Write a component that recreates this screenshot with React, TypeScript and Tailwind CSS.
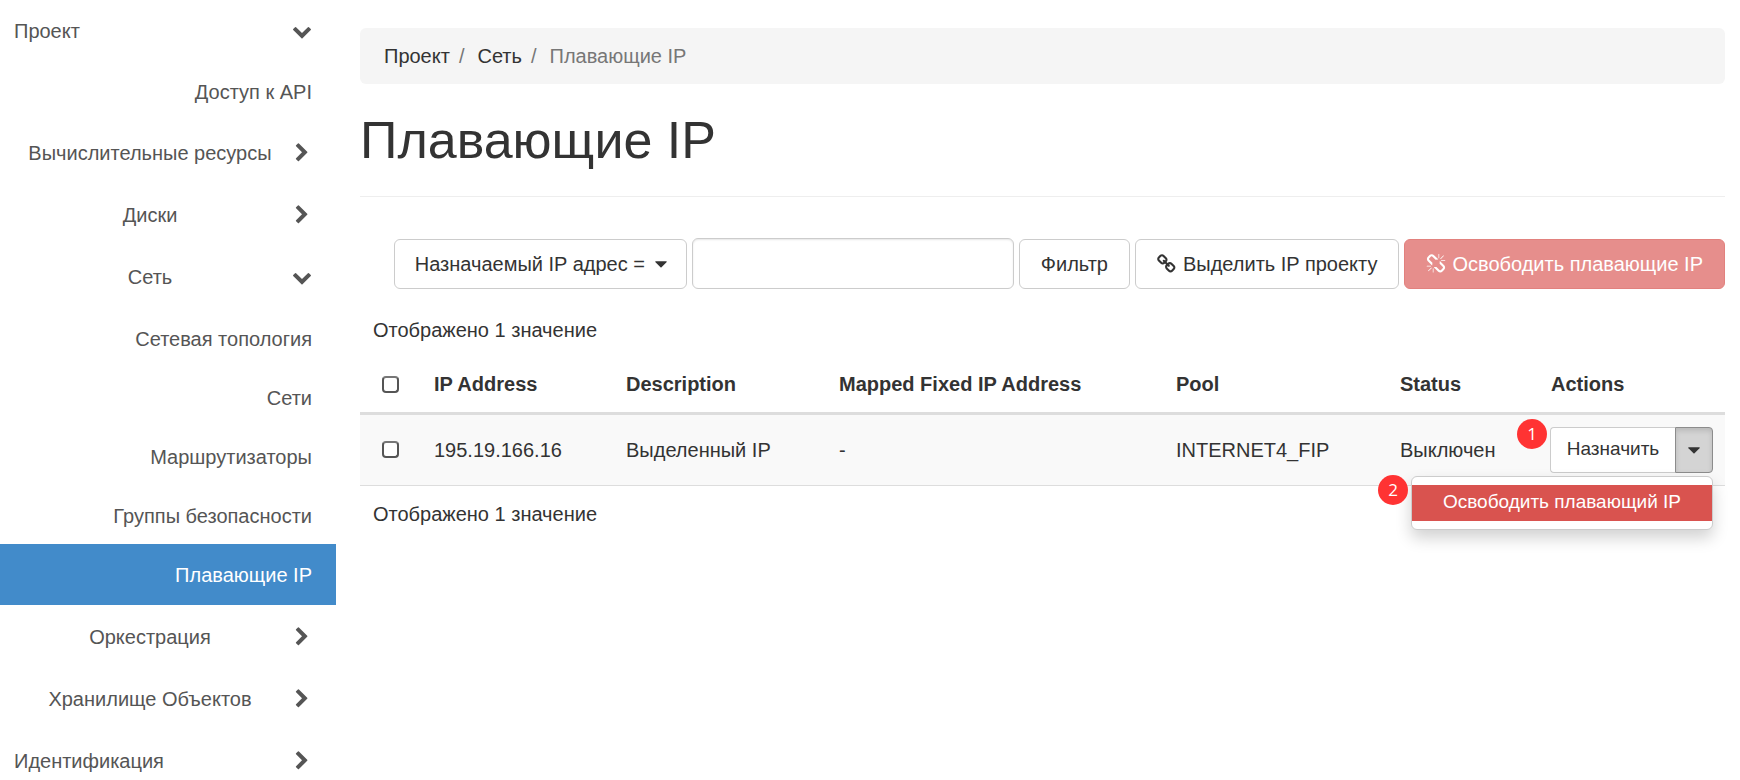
import { useState } from 'react'
import clsx from 'clsx'

interface NavItem {
  label: string
  kind: 'root' | 'panel' | 'link'
  open?: boolean
}

interface FloatingIp {
  address: string
  description: string
  mapped: string
  pool: string
  status: string
}

const ICONS = {
  chevronDown:
    'M1683 808l-742 741q-19 19-45 19t-45-19l-742-741q-19-19-19-45.5t19-45.5l166-165q19-19 45-19t45 19l531 531 531-531q19-19 45-19t45 19l166 165q19 19 19 45.5t-19 45.5z',
  chevronRight:
    'M1363 877l-742 742q-19 19-45 19t-45-19l-166-166q-19-19-19-45t19-45l531-531-531-531q-19-19-19-45t19-45l166-166q19-19 45-19t45 19l742 742q19 19 19 45t-19 45z',
  caret:
    'M1408 704q0 26-19 45l-448 448q-19 19-45 19t-45-19l-448-448q-19-19-19-45t19-45 45-19h896q26 0 45 19t19 45z',
  link:
    'M1456 1216q0-40-28-68l-208-208q-28-28-68-28-42 0-72 32 3 3 19 18.5t21.5 21.5 15 19 13 25.5 3.5 27.5q0 40-28 68t-68 28q-15 0-27.5-3.5t-25.5-13-19-15-21.5-21.5-18.5-19q-33 31-33 73 0 40 28 68l206 207q27 27 68 27 40 0 68-26l147-146q28-28 28-67zm-703-705q0-40-28-68l-206-207q-28-28-68-28-39 0-68 27l-147 146q-28 28-28 67 0 40 28 68l208 208q27 27 68 27 42 0 72-31-3-3-19-18.5t-21.5-21.5-15-19-13-25.5-3.5-27.5q0-40 28-68t68-28q15 0 27.5 3.5t25.5 13 19 15 21.5 21.5 18.5 19q33-31 33-73zm895 705q0 120-85 203l-147 146q-83 83-203 83-121 0-204-85l-206-207q-83-83-83-203 0-123 88-209l-88-88q-86 88-208 88-120 0-204-84l-208-208q-84-84-84-204t85-203l147-146q83-83 203-83 121 0 204 85l206 207q83 83 83 203 0 123-88 209l88 88q86-88 208-88 120 0 204 84l208 208q84 84 84 204z',
  unlink:
    'M503 1271l-256 256q-10 9-23 9-12 0-23-9-9-10-9-23t9-23l256-256q10-9 23-9t23 9q9 10 9 23t-9 23zm169 41v320q0 14-9 23t-23 9-23-9-9-23v-320q0-14 9-23t23-9 23 9 9 23zm-224-224q0 14-9 23t-23 9h-320q-14 0-23-9t-9-23 9-23 23-9h320q14 0 23 9t9 23zm1264 128q0 120-85 203l-147 146q-83 83-203 83-121 0-204-85l-334-335q-21-21-42-56l239-18 273 274q28 28 68 28.5t68-27.5l147-146q28-28 28-67 0-40-28-68l-274-275 18-239q35 21 56 42l336 336q84 86 84 204zm-617-724l-239 18-273-274q-28-28-68-28-39 0-68 27l-147 146q-28 28-28 67 0 40 28 68l274 274-18 240q-35-21-56-42l-336-336q-84-86-84-204 0-120 85-203l147-146q83-83 203-83 121 0 204 85l334 335q21 21 42 56zm633 84q0 14-9 23t-23 9h-320q-14 0-23-9t-9-23 9-23 23-9h320q14 0 23 9t9 23zm-544-544v320q0 14-9 23t-23 9-23-9-9-23v-320q0-14 9-23t23-9 23 9 9 23zm407 151l-256 256q-11 9-23 9t-23-9q-9-10-9-23t9-23l256-256q10-9 23-9t23 9q9 10 9 23t-9 23z'
}

function Icon({ name, className }: { name: keyof typeof ICONS; className?: string }) {
  return (
    <svg viewBox="0 0 1792 1792" fill="currentColor" aria-hidden="true" className={clsx('size-5 shrink-0', className)}>
      <path d={ICONS[name]} />
    </svg>
  )
}

// Items are grouped so that every opened panel is followed by its links
const NAV: NavItem[][] = [
  [{ label: 'Проект', kind: 'root', open: true }],
  [{ label: 'Доступ к API', kind: 'link' }],
  [
    { label: 'Вычислительные ресурсы', kind: 'panel' },
    { label: 'Диски', kind: 'panel' },
    { label: 'Сеть', kind: 'panel', open: true }
  ],
  [
    { label: 'Сетевая топология', kind: 'link' },
    { label: 'Сети', kind: 'link' },
    { label: 'Маршрутизаторы', kind: 'link' },
    { label: 'Группы безопасности', kind: 'link' },
    { label: 'Плавающие IP', kind: 'link' }
  ],
  [
    { label: 'Оркестрация', kind: 'panel' },
    { label: 'Хранилище Объектов', kind: 'panel' },
    { label: 'Идентификация', kind: 'root' }
  ]
]

const ROWS: FloatingIp[] = [
  {
    address: '195.19.166.16',
    description: 'Выделенный IP',
    mapped: '-',
    pool: 'INTERNET4_FIP',
    status: 'Выключен'
  }
]

function Sidebar() {
  const [active, setActive] = useState('Плавающие IP')

  return (
    <nav className="w-[336px] shrink-0 text-[#555]">
      {NAV.map((group, i) => (
        <ul key={i} className="first:-mb-px last:mt-px">
          {group.map(item => (
            <li key={item.label} className={clsx(item.kind === 'link' && 'not-first:-mt-0.5')}>
              {item.kind === 'link' ? (
                <a
                  href="#"
                  onClick={() => setActive(item.label)}
                  className={clsx(
                    'flex h-[61px] items-center justify-end pr-6',
                    active === item.label && 'bg-[#428bca] text-white'
                  )}
                >
                  {item.label}
                </a>
              ) : (
                <button type="button" aria-expanded={!!item.open} className="flex h-[62px] w-full items-center pr-6">
                  <span className={clsx('flex-1', item.kind === 'root' ? 'pl-[14px] text-left' : 'pl-2 text-center')}>
                    {item.label}
                  </span>
                  <Icon name={item.open ? 'chevronDown' : 'chevronRight'} />
                </button>
              )}
            </li>
          ))}
        </ul>
      ))}
    </nav>
  )
}

function Breadcrumb() {
  return (
    <ol className="flex h-14 items-center rounded-md bg-[#f5f5f5] px-6">
      <li><a href="#">Проект</a></li>
      <li className="px-[9px] text-[#777]">/</li>
      <li className="pl-1"><a href="#">Сеть</a></li>
      <li className="px-[9px] text-[#777]">/</li>
      <li className="pl-1 text-[#777]">Плавающие IP</li>
    </ol>
  )
}

const button = 'flex h-[50px] shrink-0 items-center gap-[6px] rounded-md border px-[21px]'

function Toolbar() {
  const [query, setQuery] = useState('')

  return (
    <div className="flex items-center justify-end gap-[5px]">
      <div className="relative shrink-0">
        <select
          aria-label="Поле фильтра"
          className="h-[50px] appearance-none rounded-md border border-[#ccc] bg-white pr-10 pl-5"
        >
          <option>Назначаемый IP адрес =</option>
        </select>
        <Icon name="caret" className="pointer-events-none absolute top-[15px] right-4" />
      </div>
      <input
        type="text"
        aria-label="Фильтр"
        value={query}
        onChange={e => setQuery(e.target.value)}
        className="h-[51px] w-[322px] rounded-md border border-[#ccc] px-4 shadow-[inset_0_1px_2px_rgba(0,0,0,0.1)]"
      />
      <button type="button" className={clsx(button, 'border-[#ccc] bg-white')}>Фильтр</button>
      <button type="button" className={clsx(button, 'border-[#ccc] bg-white')}>
        <Icon name="link" />
        Выделить IP проекту
      </button>
      <button type="button" disabled className={clsx(button, 'border-[#d43f3a] bg-[#d9534f] text-white opacity-65')}>
        <Icon name="unlink" />
        Освободить плавающие IP
      </button>
    </div>
  )
}

function StepBadge({ n, className }: { n: number; className: string }) {
  return (
    <span
      className={clsx(
        'absolute z-20 flex size-[30px] items-center justify-center rounded-full bg-[#ff3333] font-["Open_Sans",sans-serif] text-[17px] text-white',
        className
      )}
    >
      {n}
    </span>
  )
}

function RowActions() {
  const [open, setOpen] = useState(true)

  return (
    <div className="relative flex h-[46px] text-[19px]">
      <button type="button" className="flex-1 rounded-l border border-r-0 border-[#ccc] bg-white">Назначить</button>
      <button
        type="button"
        aria-label="Другие действия"
        aria-expanded={open}
        onClick={() => setOpen(!open)}
        className="flex w-[38px] items-center justify-center rounded-r border border-[#8c8c8c] bg-[#d4d4d4] shadow-[inset_0_3px_5px_rgba(0,0,0,0.125)]"
      >
        <Icon name="caret" />
      </button>
      <StepBadge n={1} className="-top-2 right-[166px]" />
      {open && (
        <div className="absolute top-full right-0 z-10 mt-[3px] w-[302px] rounded-md border border-[#ccc] bg-white py-2 shadow-[0_8px_16px_rgba(0,0,0,0.18)]">
          <button type="button" className="block h-9 w-full bg-[#d9534f] text-center text-white">
            Освободить плавающий IP
          </button>
          <StepBadge n={2} className="-top-[2px] right-[304px]" />
        </div>
      )}
    </div>
  )
}

function FloatingIpTable() {
  const [selected, setSelected] = useState<string[]>([])
  const check =
    'block size-[17px] appearance-none rounded-[4px] border-2 border-[#555] border-t-[#777] bg-white checked:bg-[#428bca]'

  const toggle = (address: string) =>
    setSelected(selected.includes(address) ? selected.filter(a => a !== address) : [...selected, address])

  return (
    <table className="w-full table-fixed text-left">
      <colgroup>
        <col className="w-[61px]" />
        <col className="w-[192px]" />
        <col className="w-[213px]" />
        <col />
        <col className="w-[224px]" />
        <col className="w-[151px]" />
        <col className="w-[187px]" />
      </colgroup>
      <thead>
        <tr className="h-14 border-b-3 border-[#ddd]">
          <th className="pl-[22px]">
            <input
              type="checkbox"
              aria-label="Выбрать все"
              checked={selected.length === ROWS.length}
              onChange={e => setSelected(e.target.checked ? ROWS.map(r => r.address) : [])}
              className={check}
            />
          </th>
          <th className="px-[13px]">IP Address</th>
          <th className="px-[13px]">Description</th>
          <th className="px-[13px]">Mapped Fixed IP Address</th>
          <th className="px-[13px]">Pool</th>
          <th className="px-[13px]">Status</th>
          <th className="px-[13px]">Actions</th>
        </tr>
      </thead>
      <tbody>
        {ROWS.map(row => (
          <tr key={row.address} className="h-[72px] border-b border-[#ddd] bg-[#f9f9f9]">
            <td className="pl-[22px]">
              <input
                type="checkbox"
                aria-label={row.address}
                checked={selected.includes(row.address)}
                onChange={() => toggle(row.address)}
                className={check}
              />
            </td>
            <td className="px-[13px]">{row.address}</td>
            <td className="px-[13px]">{row.description}</td>
            <td className="px-[13px]">{row.mapped}</td>
            <td className="px-[13px]">{row.pool}</td>
            <td className="px-[13px]">{row.status}</td>
            <td className="px-3"><RowActions /></td>
          </tr>
        ))}
      </tbody>
    </table>
  )
}

export default function App() {
  return (
    <div className='flex min-h-screen bg-white font-["Liberation_Sans",Arial,sans-serif] text-xl text-[#333]'>
      <Sidebar />
      <main className="min-w-0 flex-1 pt-7 pr-[15px] pl-6">
        <Breadcrumb />
        <h1 className="mb-[41px] border-b border-[#eee] py-7 text-[52px] leading-[56px]">Плавающие IP</h1>
        <Toolbar />
        <p className="px-[13px] pt-[27px] pb-[13px]">Отображено 1 значение</p>
        <FloatingIpTable />
        <p className="px-[13px] pt-[14px]">Отображено 1 значение</p>
      </main>
    </div>
  )
}
